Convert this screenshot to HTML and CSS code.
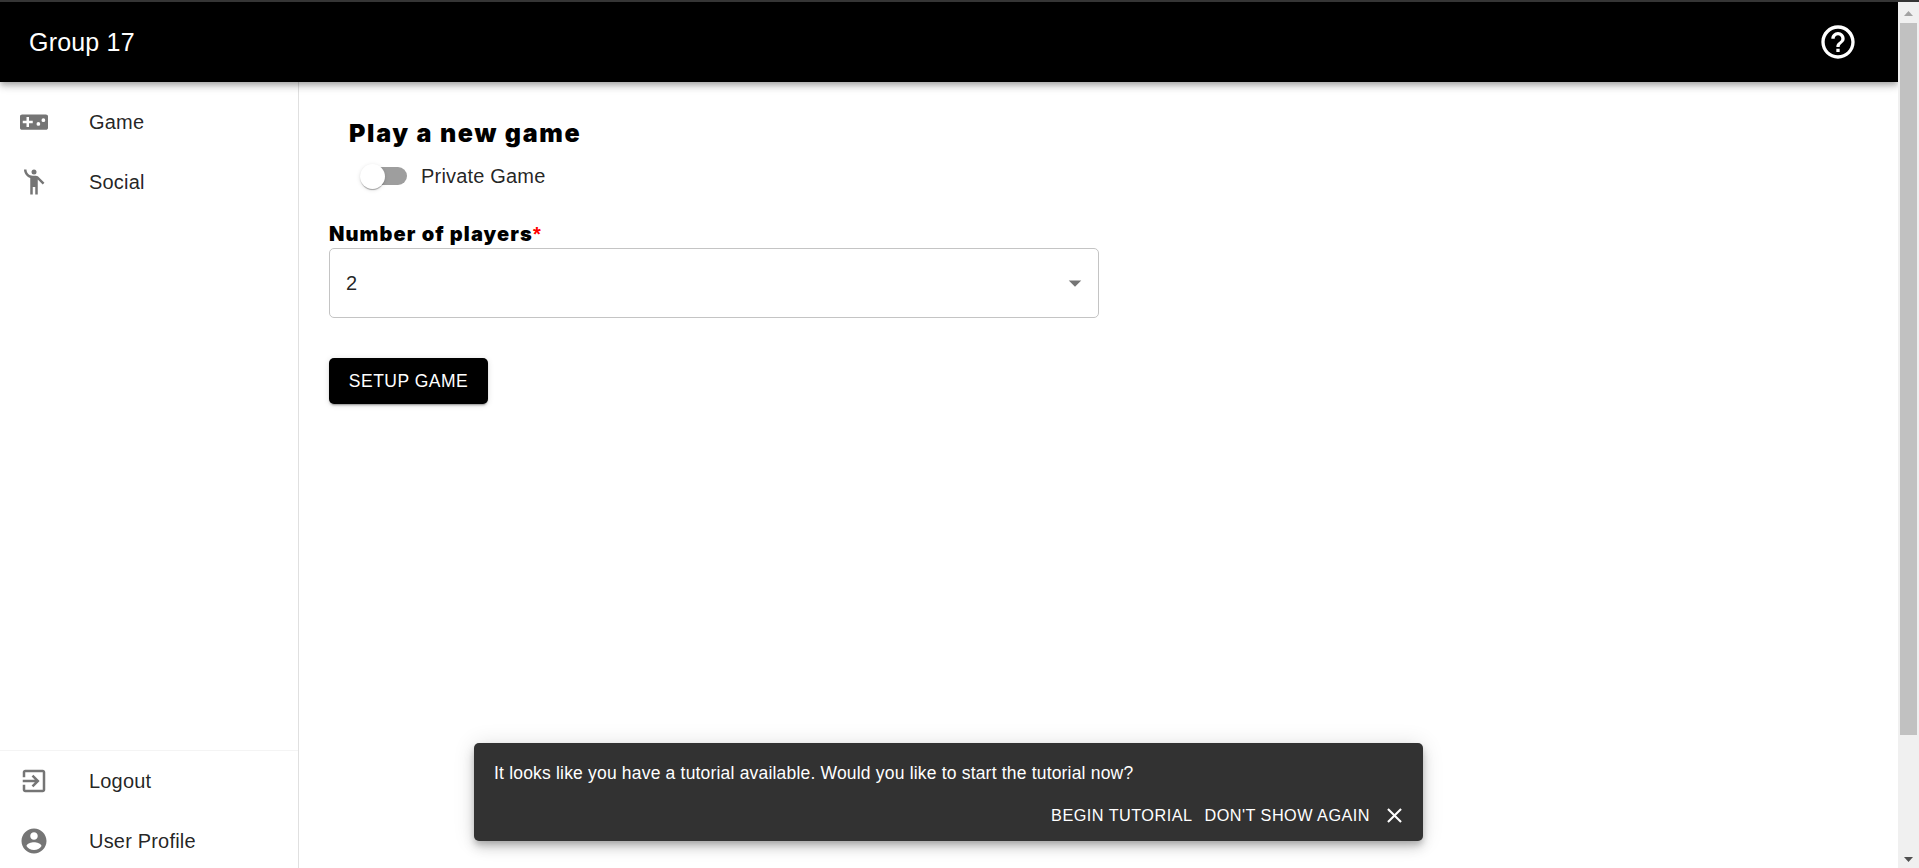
FILE: index.html
```html
<!DOCTYPE html>
<html lang="en">
<head>
<meta charset="utf-8">
<title>Group 17</title>
<link rel="stylesheet" href="styles.css">
</head>
<body>
<div class="viewport">
  <div class="page">
    <header class="appbar">
      <h1 class="brand">Group 17</h1>
      <svg class="help" viewBox="0 0 24 24"><path d="M11 18h2v-2h-2v2zm1-16C6.48 2 2 6.48 2 12s4.480 10 10 10 10-4.480 10-10S17.520 2 12 2zm0 18c-4.410 0-8-3.590-8-8s3.590-8 8-8 8 3.590 8 8-3.590 8-8 8zm0-14c-2.210 0-4 1.790-4 4h2c0-1.100.9-2 2-2s2 .9 2 2c0 2-3 1.750-3 5h2c0-2.250 3-2.500 3-5 0-2.210-1.790-4-4-4z"/></svg>
    </header>
    <div class="body">
      <nav class="sidebar">
        <div class="nav-group">
          <a class="nav-item"><svg class="icon" viewBox="0 0 24 24"><path fill-rule="evenodd" d="M21.500 5.900h-19C1.500 5.900 .8 6.500 .8 7.400v9.300c0 .83.67 1.500 1.700 1.500h19c.9 0 1.700-.67 1.700-1.500V7.400c0-.9-.8-1.500-1.700-1.500zM11 13H8v3H6v-3H3v-2h3V8h2v3h3v2zm4.500 2a1.500 1.500 0 1 1 0-3 1.500 1.500 0 0 1 0 3zm4-3a1.500 1.500 0 1 1 0-3 1.500 1.500 0 0 1 0 3z"/></svg><span>Game</span></a>
          <a class="nav-item"><svg class="icon" viewBox="0 0 24 24"><circle cx="12" cy="4" r="2"/><path d="M15.890 8.110C15.500 7.720 14.830 7 13.530 7h-2.540C8.240 6.990 6 4.750 6 2H4c0 3.160 2.110 5.840 5 6.710V22h2v-6h2v6h2V10.050L18.950 14l1.410-1.410-4.470-4.480z"/></svg><span>Social</span></a>
        </div>
        <div class="nav-group nav-bottom">
          <a class="nav-item"><svg class="icon" viewBox="0 0 24 24"><path d="M10.090 15.590L11.500 17l5-5-5-5-1.410 1.410L12.670 11H3v2h9.670l-2.580 2.590zM19 3H5c-1.110 0-2 .9-2 2v4h2V5h14v14H5v-4H3v4c0 1.100.89 2 2 2h14c1.100 0 2-.9 2-2V5c0-1.100-.9-2-2-2z"/></svg><span>Logout</span></a>
          <a class="nav-item"><svg class="icon" viewBox="0 0 24 24"><path d="M12 2C6.480 2 2 6.480 2 12s4.480 10 10 10 10-4.480 10-10S17.520 2 12 2zm0 3c1.660 0 3 1.340 3 3s-1.340 3-3 3-3-1.340-3-3 1.340-3 3-3zm0 14.200c-2.500 0-4.710-1.280-6-3.220.03-1.990 4-3.080 6-3.080 1.990 0 5.970 1.090 6 3.080-1.290 1.940-3.500 3.220-6 3.220z"/></svg><span>User Profile</span></a>
        </div>
      </nav>
      <main class="content">
        <h2 class="heading">Play a new game</h2>
        <label class="switch-row">
          <span class="track"><span class="thumb"></span></span>
          <span>Private Game</span>
        </label>
        <div class="field-label">Number of players<span class="required">*</span></div>
        <div class="select"><span>2</span><svg class="icon" viewBox="0 0 24 24"><path d="M7 10l5 5 5-5z"/></svg></div>
        <button class="setup">SETUP GAME</button>
      </main>
    </div>
  </div>
  <div class="scrollbar">
    <svg class="arrow up" viewBox="0 0 9 5"><path d="M0 5L4.500 0 9 5z"/></svg>
    <div class="scroll-thumb"></div>
    <svg class="arrow down" viewBox="0 0 9 5"><path d="M0 0L4.500 5 9 0z"/></svg>
  </div>
</div>
<div class="snackbar">
  <div class="message">It looks like you have a tutorial available. Would you like to start the tutorial now?</div>
  <div class="actions">
    <button class="action">BEGIN TUTORIAL</button>
    <button class="action">DON'T SHOW AGAIN</button>
    <svg class="close" viewBox="0 0 24 24"><path d="M19 6.410L17.590 5 12 10.590 6.410 5 5 6.410 10.590 12 5 17.590 6.410 19 12 13.410 17.590 19 19 17.590 13.410 12z"/></svg>
  </div>
</div>
</body>
</html>
```
FILE: styles.css
```css
* { box-sizing: border-box; }
html { height: 868px; overflow: hidden; }
body {
  margin: 0;
  height: 868px;
  overflow: hidden;
  background: #fff;
  color: rgba(0, 0, 0, 0.87);
  font: 20px/30px "Liberation Sans", Arial, sans-serif;
  letter-spacing: 0.00938em;
}
.viewport { display: flex; height: 868px; border-top: 2px solid #353535; overflow: hidden; }
.page { flex: 1; display: flex; flex-direction: column; overflow: hidden; }
.appbar {
  position: relative;
  z-index: 1;
  flex: none;
  height: 80px;
  padding: 0 40px 0 29px;
  display: flex;
  align-items: center;
  justify-content: space-between;
  background: #000;
  color: #fff;
  box-shadow: 0 2.5px 5px -1px rgba(0,0,0,.2), 0 5px 6.250px rgba(0,0,0,.14), 0 1px 12.500px rgba(0,0,0,.12);
}
.brand { margin: 0; font-size: 25px; font-weight: 400; letter-spacing: 0.0075em; }
.help { width: 40px; height: 40px; fill: #fff; }
.body { flex: 1; display: flex; min-height: 0; }
.sidebar {
  width: 299px;
  height: 789px;
  border-right: 1px solid #e0e0e0;
  display: flex;
  flex-direction: column;
  justify-content: space-between;
  padding-top: 10px;
}
.nav-bottom { border-top: 1px solid #f4f4f4; }
.nav-item { display: flex; align-items: center; height: 60px; padding-left: 19px; gap: 40px; }
.icon { width: 30px; height: 30px; fill: #757575; }
.content { width: 800px; padding: 34px 0 0 30px; display: flex; flex-direction: column; align-items: flex-start; }
.heading { margin: 0 0 0 20px; color: #000; font-family: Inter, "Liberation Sans", sans-serif; font-size: 25px; line-height: 34px; font-weight: 900; letter-spacing: 1.700px; }
.switch-row { display: flex; align-items: center; height: 48px; margin: 2px 0 18px 36px; gap: 14px; }
.track { width: 42px; height: 18px; border-radius: 9px; background: #9e9e9e; display: flex; align-items: center; }
.thumb { flex: none; width: 25px; height: 25px; margin-left: -5px; border-radius: 50%; background: #fff; box-shadow: 0 2px 1px -1px rgba(0,0,0,.2), 0 1px 1px rgba(0,0,0,.14), 0 1px 4px rgba(0,0,0,.12); }
.field-label { color: #000; font-family: Inter, "Liberation Sans", sans-serif; font-weight: 900; padding-top: 2px; line-height: 28px; letter-spacing: 1.100px; }
.required { color: #f00; font-family: "Liberation Sans", Arial, sans-serif; font-weight: 700; line-height: 1; }
.select { width: 770px; height: 70px; padding: 0 8px 0 16px; border: 1px solid #c4c4c4; border-radius: 5px; display: flex; align-items: center; justify-content: space-between; }
button { font-family: inherit; border: 0; color: #fff; letter-spacing: 0.02857em; }
.setup {
  margin-top: 40px;
  width: 159px;
  height: 46px;
  padding: 0;
  border-radius: 5px;
  background: #000;
  font-size: 17.500px;
  box-shadow: 0 3px 1px -2px rgba(0,0,0,.2), 0 2px 2px rgba(0,0,0,.14), 0 1px 6px rgba(0,0,0,.12);
}
.scrollbar { width: 21px; padding-top: 9px; background: #f0f0f0; display: flex; flex-direction: column; align-items: center; }
.arrow { width: 9px; height: 5px; flex: none; }
.up { fill: #a3a3a3; }
.down { fill: #505050; margin-top: 122px; }
.scroll-thumb { flex: none; width: 17px; height: 712px; margin-top: 7px; background: #c1c1c1; }
.snackbar {
  position: absolute;
  left: 474px;
  top: 743px;
  width: 949px;
  height: 98px;
  padding: 18px 16px 8px 20px;
  border-radius: 5px;
  background: #323232;
  color: #fff;
  font-size: 17.500px;
  line-height: 25px;
  box-shadow: 0 4px 6px -1px rgba(0,0,0,.2), 0 7px 12px rgba(0,0,0,.14), 0 1px 22px rgba(0,0,0,.12);
}
.message { letter-spacing: 0.01071em; }
.actions { display: flex; align-items: center; justify-content: flex-end; height: 38px; margin-top: 10px; }
.action { background: none; padding: 0 6px; font-size: 16.250px; }
.close { width: 25px; height: 25px; margin-left: 6px; fill: #fff; }
```
